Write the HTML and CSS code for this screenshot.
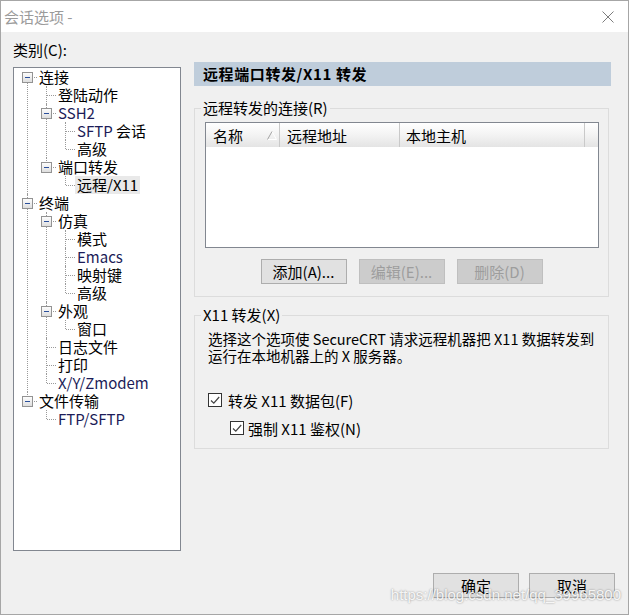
FILE: index.html
```html
<!DOCTYPE html>
<html lang="zh-CN">
<head>
    <meta charset="UTF-8">
    <title>会话选项</title>
    <link rel="stylesheet" href="styles.css">
</head>
<body>
<div class="window">
    <div class="titlebar">
        <span class="title">会话选项 -</span>
        <svg class="close" width="12" height="12" viewBox="0 0 12 12">
            <path d="M0.5 0.5L11.5 11.5M11.5 0.5L0.5 11.5"/>
        </svg>
    </div>

    <div class="main">
        <div class="side">
            <div class="side-label">类别(C):</div>
            <div class="treebox">
                <ul class="tree">
                    <li>
                        <div class="node"><span class="toggle"></span>连接</div>
                        <ul>
                            <li><div class="node">登陆动作</div></li>
                            <li>
                                <div class="node"><span class="toggle"></span><span class="en">SSH2</span></div>
                                <ul>
                                    <li><div class="node"><span class="en">SFTP</span> 会话</div></li>
                                    <li><div class="node">高级</div></li>
                                </ul>
                            </li>
                            <li>
                                <div class="node"><span class="toggle"></span>端口转发</div>
                                <ul>
                                    <li><div class="node"><span class="sel">远程/X11</span></div></li>
                                </ul>
                            </li>
                        </ul>
                    </li>
                    <li>
                        <div class="node"><span class="toggle"></span>终端</div>
                        <ul>
                            <li>
                                <div class="node"><span class="toggle"></span>仿真</div>
                                <ul>
                                    <li><div class="node">模式</div></li>
                                    <li><div class="node"><span class="en">Emacs</span></div></li>
                                    <li><div class="node">映射键</div></li>
                                    <li><div class="node">高级</div></li>
                                </ul>
                            </li>
                            <li>
                                <div class="node"><span class="toggle"></span>外观</div>
                                <ul>
                                    <li><div class="node">窗口</div></li>
                                </ul>
                            </li>
                            <li><div class="node">日志文件</div></li>
                            <li><div class="node">打印</div></li>
                            <li><div class="node"><span class="en">X/Y/Zmodem</span></div></li>
                        </ul>
                    </li>
                    <li>
                        <div class="node"><span class="toggle"></span>文件传输</div>
                        <ul>
                            <li><div class="node"><span class="en">FTP/SFTP</span></div></li>
                        </ul>
                    </li>
                </ul>
            </div>
        </div>

        <div class="panel">
            <div class="panel-title">远程端口转发/X11 转发</div>

            <fieldset class="group grp-remote">
                <legend>远程转发的连接(R)</legend>
                <div class="listview">
                    <div class="lv-head">
                        <div class="col col-name">名称
                            <svg class="sort" width="10" height="9" viewBox="0 0 10 9">
                                <path class="sort-light" d="M5 0.5L9.5 8.5H0.5"/>
                                <path class="sort-dark" d="M0.5 8.5L5 0.5"/>
                            </svg>
                        </div>
                        <div class="col col-addr">远程地址</div>
                        <div class="col col-host">本地主机</div>
                        <div class="col col-fill"></div>
                    </div>
                </div>
                <div class="btn-row">
                    <button class="btn">添加(A)...</button>
                    <button class="btn" disabled>编辑(E)...</button>
                    <button class="btn" disabled>删除(D)</button>
                </div>
            </fieldset>

            <fieldset class="group grp-x11">
                <legend>X11 转发(X)</legend>
                <p class="desc">选择这个选项使 SecureCRT 请求远程机器把 X11 数据转发到<br>运行在本地机器上的 X 服务器。</p>
                <label class="check">
                    <span class="box"><svg width="12" height="12" viewBox="0 0 12 12"><path d="M2 6.5L4.8 9.2L10.2 3"/></svg></span>
                    转发 X11 数据包(F)
                </label>
                <label class="check sub">
                    <span class="box"><svg width="12" height="12" viewBox="0 0 12 12"><path d="M2 6.5L4.8 9.2L10.2 3"/></svg></span>
                    强制 X11 鉴权(N)
                </label>
            </fieldset>
        </div>
    </div>

    <div class="footer">
        <button class="btn">确定</button>
        <button class="btn">取消</button>
        <span class="watermark">https://blog.csdn.net/qq_39965800</span>
    </div>
</div>
</body>
</html>
```

FILE: styles.css
```css
* {
    box-sizing: border-box;
}

html, body {
    margin: 0;
    padding: 0;
    background-color: #f0f0f0;
}

body {
    font-family: "Noto Sans CJK SC", "Noto Sans", sans-serif;
    font-size: 15px;
    color: #000;
}

.window {
    width: 629px;
    height: 615px;
    border: 1px solid #a6a6a6;
    background-color: #f0f0f0;
    display: flex;
    flex-direction: column;
}

/* title bar */
.titlebar {
    height: 31px;
    background-color: #fff;
    display: flex;
    align-items: center;
    justify-content: space-between;
    padding: 0 14px 0 3px;
}

.title {
    color: #9b9b9b;
    line-height: 18px;
}

.close {
    fill: none;
    stroke: #7d7d7d;
    stroke-width: 1;
}

.main {
    display: flex;
    gap: 13px;
    padding: 9px 0 0 12px;
}

/* category tree */
.side {
    width: 168px;
}

.side-label {
    line-height: 18px;
    margin-bottom: 8px;
}

.treebox {
    height: 484px;
    border: 1px solid #828790;
    background-color: #fff;
}

.tree, .tree ul {
    list-style: none;
    margin: 0;
    padding: 0;
}

.tree ul {
    padding-left: 19px;
}

.tree li {
    position: relative;
}

.tree li::before {
    content: "";
    position: absolute;
    left: 13px;
    top: 0;
    bottom: 0;
    border-left: 1px dotted #9a9a9a;
}

.tree li:last-child::before {
    bottom: auto;
    height: 9px;
}

.tree > li:first-child::before {
    top: 9px;
}

.node {
    position: relative;
    height: 18px;
    line-height: 17px;
    padding-left: 25px;
    white-space: nowrap;
}

.node::before {
    content: "";
    position: absolute;
    left: 14px;
    top: 9px;
    width: 9px;
    border-top: 1px dotted #9a9a9a;
}

.toggle {
    position: absolute;
    left: 8px;
    top: 4px;
    width: 11px;
    height: 11px;
    border: 1px solid #939393;
    background: linear-gradient(#fdfdfd, #dedede);
    z-index: 1;
}

.toggle::after {
    content: "";
    position: absolute;
    left: 2px;
    top: 4px;
    width: 5px;
    height: 1px;
    background-color: #2a4f9b;
}

.en {
    color: #1c1c58;
}

.sel {
    display: inline-block;
    height: 18px;
    padding: 0 2px;
    margin-left: -2px;
    background-color: #e9e9e9;
}

/* right panel */
.panel {
    width: 417px;
    padding-top: 21px;
}

.panel-title {
    height: 24px;
    line-height: 24px;
    padding-left: 9px;
    background-color: #bfcddb;
    font-weight: bold;
    letter-spacing: 0.6px;
}

.group {
    width: 415px;
    min-width: 0;
    margin: 0;
    padding: 0;
    border: 1px solid #dcdcdc;
}

.group legend {
    margin-left: 6px;
    padding: 0 2px;
    line-height: 18px;
}

.grp-remote {
    margin-top: 13px;
}

.listview {
    width: 394px;
    height: 126px;
    margin: 5px 0 0 10px;
    border: 1px solid #828790;
    background-color: #fff;
}

.lv-head {
    display: flex;
    height: 24px;
    background: linear-gradient(#ffffff, #f3f3f3 50%, #e4e4e4);
}

.col {
    display: flex;
    align-items: center;
    padding-left: 7px;
    border-right: 1px solid #c9c9c9;
    white-space: nowrap;
}

.col-name {
    width: 74px;
    justify-content: space-between;
    padding-right: 2px;
}

.col-addr {
    width: 120px;
}

.col-host {
    width: 185px;
    padding-left: 6px;
}

.col-fill {
    flex: 1;
    border-right: none;
}

.sort {
    fill: none;
    stroke-width: 1;
}

.sort-light {
    stroke: #ffffff;
}

.sort-dark {
    stroke: #a3a3a3;
}

.btn-row {
    display: flex;
    justify-content: center;
    gap: 12px;
    margin: 11px 0 12px;
}

.btn {
    width: 86px;
    height: 25px;
    padding: 0;
    border: 1px solid #adadad;
    background-color: #e1e1e1;
    font: inherit;
    line-height: 23px;
    color: #000;
}

.btn:disabled {
    color: #9d9d9d;
    background-color: #cccccc;
    border-color: #bfbfbf;
}

.grp-x11 {
    margin-top: 9px;
    padding-bottom: 11px;
}

.desc {
    margin: 6px 13px 0;
    font-size: 14.5px;
    line-height: 17px;
    white-space: nowrap;
}

.check {
    display: flex;
    align-items: center;
    gap: 6px;
    height: 18px;
    margin: 27px 0 0 13px;
}

.check.sub {
    margin: 10px 0 0 35px;
    gap: 4px;
}

.box {
    display: flex;
    align-items: center;
    justify-content: center;
    width: 14px;
    height: 14px;
    border: 1px solid #333;
    background-color: #fff;
}

.box svg {
    fill: none;
    stroke: #444;
    stroke-width: 1.2;
}

/* bottom buttons */
.footer {
    position: relative;
    display: flex;
    justify-content: flex-end;
    gap: 10px;
    margin-top: 22px;
    padding-right: 13px;
}

.watermark {
    position: absolute;
    right: 7px;
    top: 13px;
    font-family: "Liberation Sans", Arial, sans-serif;
    font-size: 15px;
    line-height: 18px;
    color: rgba(255, 255, 255, 0.9);
    text-shadow: 0 0 2px rgba(0, 0, 0, 0.45);
    white-space: nowrap;
}
```
